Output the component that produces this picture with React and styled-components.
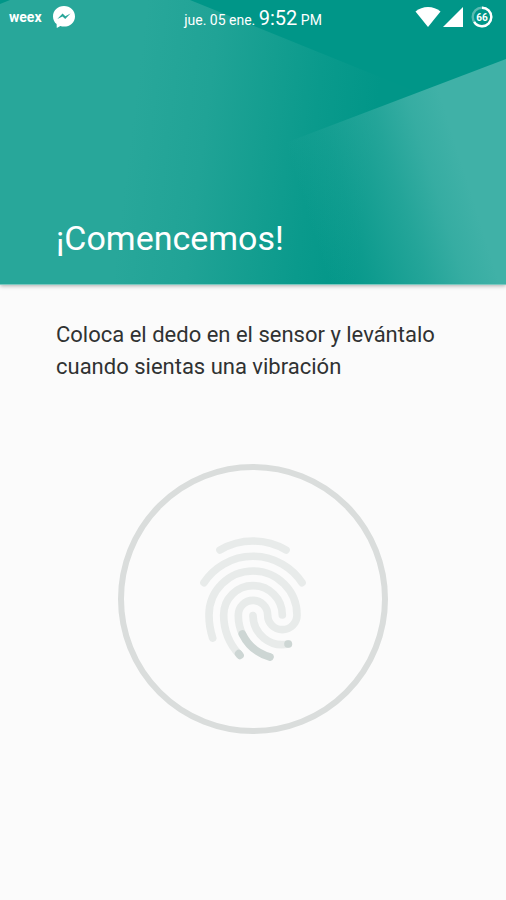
import React from "react";
import styled, { createGlobalStyle } from "styled-components";

const COLORS = {
  teal: "#009688",
  tealLight: "#28a79a",
  tealPale: "#40b1a7",
  paper: "#fbfbfb",
  text: "#303232",
  ring: "#dadddc",
  ridge: "#e8ebea",
  ridgeActive: "#cdd6d4",
};

const HeaderArt = () => {
  return (
    <Art viewBox="0 0 506 284" preserveAspectRatio="none" aria-hidden="true">
      <defs>
        <linearGradient id="left" gradientUnits="userSpaceOnUse" x1="130" y1="140" x2="370" y2="170">
          <stop offset="0" stopColor={COLORS.tealLight} />
          <stop offset="0.3" stopColor="#20a396" />
          <stop offset="0.55" stopColor="#149e90" />
          <stop offset="0.75" stopColor="#0a9a8c" />
          <stop offset="1" stopColor="#019688" />
        </linearGradient>
        <linearGradient id="right" gradientUnits="userSpaceOnUse" x1="285" y1="143" x2="440" y2="94">
          <stop offset="0" stopColor={COLORS.tealPale} stopOpacity="0" />
          <stop offset="0.25" stopColor={COLORS.tealPale} stopOpacity="0.2" />
          <stop offset="0.58" stopColor={COLORS.tealPale} stopOpacity="0.55" />
          <stop offset="0.8" stopColor={COLORS.tealPale} stopOpacity="0.84" />
          <stop offset="1" stopColor={COLORS.tealPale} />
        </linearGradient>
      </defs>
      <rect width="506" height="284" fill={COLORS.teal} />
      <path d="M10 0H190L375 75L506 128V284H0V4Z" fill="url(#left)" />
      <path d="M506 59L285 143L324 284H506Z" fill="url(#right)" />
    </Art>
  );
};

const StatusBar = () => {
  return (
    <Bar>
      <BarGroup>
        <Carrier>weex</Carrier>
        <svg width="24" height="24" viewBox="0 0 24 24" aria-label="Messenger">
          <path
            fill="#fff"
            d="M12 1C5.800 1 1 5.600 1 11.400c0 3.100 1.400 5.800 3.600 7.700L4.800 23l3.500-2c1.200.4 2.400.6 3.700.6 6.200 0 11-4.500 11-10.200S18.200 1 12 1Z"
          />
          <path
            fill="#28a699"
            d="M5.300 14.100 10.600 8.600l2.700 2.700 5.200-2.700-5.300 5.500-2.700-2.700Z"
          />
        </svg>
      </BarGroup>
      <Clock>
        jue. 05 ene. <Time>9:52</Time> PM
      </Clock>
      <Indicators>
        <svg width="26" height="20" viewBox="0 0 26 20" aria-label="Wi-Fi">
          <path fill="#fff" d="M13 20 .5 4.500C4 1.600 8.300 0 13 0s9 1.600 12.500 4.500Z" />
        </svg>
        <svg width="20" height="20" viewBox="0 0 20 20" aria-label="Signal">
          <path fill="#fff" d="M0 20 20 0V20Z" />
        </svg>
        <Battery width="22" height="22" viewBox="0 0 22 22" aria-label="Battery">
          <circle cx="11" cy="11" r="9.300" />
          <circle cx="11" cy="11" r="9.300" pathLength="100" strokeDasharray="66 34" transform="rotate(-90 11 11)" />
          <text x="11" y="14.500">66</text>
        </Battery>
      </Indicators>
    </Bar>
  );
};

const Fingerprint = () => {
  return (
    <Print viewBox="0 0 378 444" aria-hidden="true">
      <path d="M90 75A195 195 0 0 1 288 75" />
      <path d="M42 173A176 176 0 0 1 336 173" />
      <path d="M68 339A220 220 0 0 1 57 270A132 132 0 0 1 321 270A44 44 0 0 1 233 270A44 44 0 0 0 145 270A132 132 0 0 0 157 327" />
      <path d="M148 389A176 176 0 0 1 101 270A88 88 0 0 1 277 270" />
      <path d="M189 272A88 88 0 0 0 295 357" />
      <Active d="M157 327A132 132 0 0 0 240 396" />
      <Active d="M146 386L150 391" />
      <Active d="M294 357H295" />
    </Print>
  );
};

const App = () => {
  return (
    <Screen>
      <GlobalStyle />
      <Header>
        <HeaderArt />
        <StatusBar />
        <Title>¡Comencemos!</Title>
      </Header>
      <Content>
        <Instructions>
          Coloca el dedo en el sensor y levántalo cuando sientas una vibración
        </Instructions>
        <Ring>
          <Fingerprint />
        </Ring>
      </Content>
    </Screen>
  );
};

const GlobalStyle = createGlobalStyle`
  *,
  *::before,
  *::after {
    box-sizing: border-box;
  }

  body {
    margin: 0;
    background: ${COLORS.paper};
    color: ${COLORS.text};
    font-family: Roboto, "Liberation Sans", sans-serif;
  }

  h1,
  p {
    margin: 0;
    font-weight: 400;
  }

  svg {
    display: block;
  }
`;

const Screen = styled.div`
  display: flex;
  flex-direction: column;
  min-height: 100vh;
`;

const Header = styled.header`
  position: relative;
  isolation: isolate;
  display: flex;
  flex-direction: column;
  justify-content: space-between;
  min-height: 285px;
  padding-bottom: 26px;
  border-bottom: 1px solid #7cc8c0;
  box-shadow: 0 1px 4px rgba(0, 0, 0, 0.3);
  color: #fff;
`;

/* Sits behind the bar and the title */
const Art = styled.svg`
  position: absolute;
  inset: 0;
  z-index: -1;
  width: 100%;
  height: 100%;
`;

const Bar = styled.div`
  display: grid;
  grid-template-columns: 1fr auto 1fr;
  align-items: center;
  height: 34px;
  padding: 0 9px;
`;

const BarGroup = styled.div`
  display: flex;
  align-items: center;
  gap: 10px;
`;

const Indicators = styled(BarGroup)`
  justify-content: flex-end;
  gap: 2px;
  padding-right: 4px;
`;

const Carrier = styled.span`
  font-size: 14px;
  font-weight: 700;
`;

const Clock = styled.time`
  padding-top: 2px;
  font-size: 14px;
  white-space: nowrap;
`;

const Time = styled.span`
  font-size: 20px;
`;

const Battery = styled.svg`
  margin-left: 6px;

  circle {
    fill: none;
    stroke: #fff;
    stroke-width: 2.4;
  }

  circle:first-child {
    stroke-opacity: 0.35;
  }

  text {
    fill: #fff;
    font-size: 10px;
    font-weight: 700;
    text-anchor: middle;
  }
`;

const Title = styled.h1`
  padding: 0 56px;
  font-size: 34px;
  line-height: 40px;
`;

const Content = styled.main`
  display: flex;
  flex-direction: column;
  align-items: center;
  gap: 81px;
  padding: 34px 56px;
`;

const Instructions = styled.p`
  align-self: stretch;
  font-size: 22px;
  line-height: 32px;
`;

const Ring = styled.div`
  display: grid;
  place-items: center;
  width: 270px;
  height: 270px;
  border: 6px solid ${COLORS.ring};
  border-radius: 50%;
`;

const Print = styled.svg`
  width: 126px;
  height: 148px;
  fill: none;
  stroke: ${COLORS.ridge};
  stroke-width: 23;
  stroke-linecap: round;
`;

const Active = styled.path`
  stroke: ${COLORS.ridgeActive};
`;

export default App;
